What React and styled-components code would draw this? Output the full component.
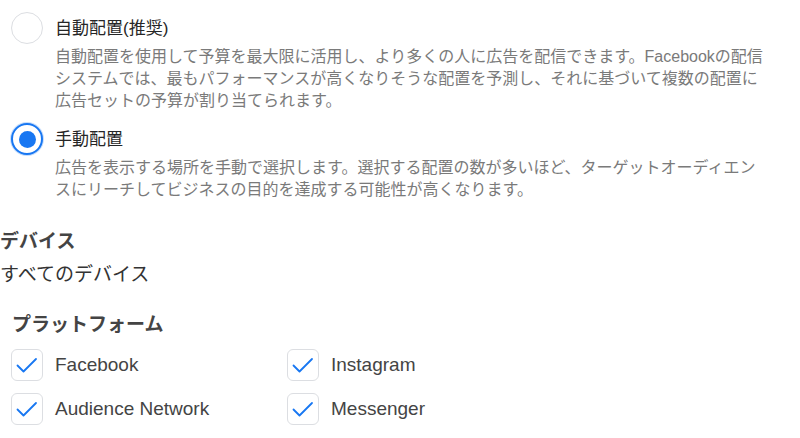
import React from 'react'
import styled, { createGlobalStyle } from 'styled-components'

const GlobalStyle = createGlobalStyle`
  body {
    margin: 0;
    background: #fff;
    font-family: "Liberation Sans", "Noto Sans CJK JP", sans-serif;
  }
`

const Page = styled.div`
  width: 800px;
  height: 438px;
  padding-top: 12px;
  box-sizing: border-box;
  overflow: hidden;
`

const Option = styled.label`
  display: flex;
  align-items: flex-start;
  gap: 12px;
  padding-left: 11px;
  & + & {
    margin-top: 11px;
  }
`

const Radio = styled.span`
  flex: none;
  width: 32px;
  height: 32px;
  box-sizing: border-box;
  border-radius: 50%;
  display: flex;
  align-items: center;
  justify-content: center;
  background: #fff;
  border: ${p => (p.checked ? '2px solid #1877f2' : '1px solid #dcdee2')};
  box-shadow: ${p => (p.checked ? '0 0 0 1px rgba(24, 119, 242, 0.25)' : 'none')};
  &::after {
    content: '';
    display: ${p => (p.checked ? 'block' : 'none')};
    width: 17px;
    height: 17px;
    border-radius: 50%;
    background: #1877f2;
  }
`

const OptionBody = styled.div`
  flex: 1;
  min-width: 0;
`

const OptionTitle = styled.div`
  font-size: 17px;
  line-height: 34px;
  color: #262626;
`

const OptionDesc = styled.div`
  font-size: 16px;
  line-height: 22px;
  color: #7a7a7a;
  white-space: nowrap;
`

const SectionLabel = styled.div`
  font-size: 19px;
  line-height: 26px;
  font-weight: bold;
  color: #444;
  margin-top: ${p => p.$top || 0}px;
  padding-left: ${p => p.$indent || 0}px;
`

const SectionValue = styled.div`
  font-size: 19px;
  line-height: 26px;
  color: #333;
  margin-top: 7px;
`

const CheckGrid = styled.div`
  display: grid;
  grid-template-columns: 276px auto;
  row-gap: 12px;
  padding-left: 11px;
  margin-top: 11px;
`

const CheckItem = styled.label`
  display: flex;
  align-items: center;
  gap: 12px;
  font-size: 19px;
  color: #444;
`

const Box = styled.span`
  flex: none;
  width: 32px;
  height: 32px;
  box-sizing: border-box;
  border: 1px solid #dcdee2;
  border-radius: 6px;
  background: #fff;
  display: flex;
  svg {
    display: block;
  }
`

const Check = () => (
  <svg width="30" height="30" viewBox="0 0 30 30">
    <path d="M5.5 15.5 L11.5 21.5 L24 9" fill="none" stroke="#1877f2" strokeWidth="1.8" strokeLinecap="round" strokeLinejoin="round" />
  </svg>
)

const options = [
  {
    title: '自動配置(推奨)',
    desc: [
      '自動配置を使用して予算を最大限に活用し、より多くの人に広告を配信できます。Facebookの配信',
      'システムでは、最もパフォーマンスが高くなりそうな配置を予測し、それに基づいて複数の配置に',
      '広告セットの予算が割り当てられます。'
    ],
    checked: false
  },
  {
    title: '手動配置',
    desc: [
      '広告を表示する場所を手動で選択します。選択する配置の数が多いほど、ターゲットオーディエン',
      'スにリーチしてビジネスの目的を達成する可能性が高くなります。'
    ],
    checked: true
  }
]

const platforms = ['Facebook', 'Instagram', 'Audience Network', 'Messenger']

const App = () => (
  <>
    <GlobalStyle />
    <Page>
      {options.map(o => (
        <Option key={o.title}>
          <Radio checked={o.checked} />
          <OptionBody>
            <OptionTitle>{o.title}</OptionTitle>
            <OptionDesc>
              {o.desc.map((line, i) => (
                <React.Fragment key={i}>
                  {i > 0 && <br />}
                  {line}
                </React.Fragment>
              ))}
            </OptionDesc>
          </OptionBody>
        </Option>
      ))}
      <SectionLabel $top={28}>デバイス</SectionLabel>
      <SectionValue>すべてのデバイス</SectionValue>
      <SectionLabel $top={24} $indent={12}>プラットフォーム</SectionLabel>
      <CheckGrid>
        {platforms.map(p => (
          <CheckItem key={p}>
            <Box><Check /></Box>
            {p}
          </CheckItem>
        ))}
      </CheckGrid>
    </Page>
  </>
)

export default App
